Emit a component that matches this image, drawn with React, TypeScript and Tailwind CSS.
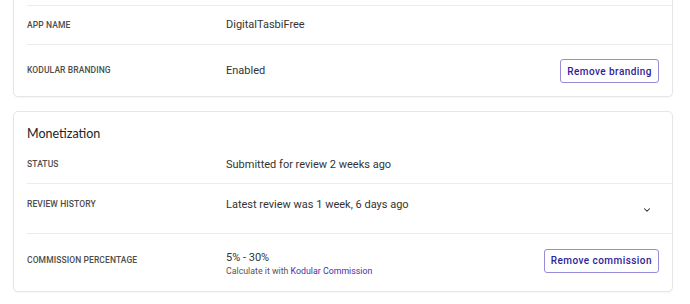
import { ChevronDown } from "lucide-react";

// One label / value row inside a settings card
function Row({
  label,
  children,
  className = "",
  labelClass = "leading-[17px]",
}: {
  label: string;
  children: React.ReactNode;
  className?: string;
  labelClass?: string;
}) {
  return (
    <div className={`ml-[13px] pr-[13px] flex border-b border-[#ececec] last:border-b-0 ${className}`}>
      <div className={`w-[199px] shrink-0 text-[8.5px] font-medium uppercase text-[#4d4d4d] tracking-[0.1px] ${labelClass}`}>{label}</div>
      <div className="flex-1 flex items-center">{children}</div>
    </div>
  );
}

function OutlineButton({ children }: { children: React.ReactNode }) {
  return (
    <button className="h-[24px] px-[6px] rounded-[3px] border border-[#9a8ad8] text-[10px] font-medium tracking-[0.45px] text-[#2f2296] bg-white">
      {children}
    </button>
  );
}

export default function App() {
  return (
    <div className="min-h-screen bg-white font-['Roboto',sans-serif] text-[#333] pb-4">
      {/* App info card (top cut off) */}
      <section className="ml-[13px] mr-[17px] -mt-px border border-[#e6e6e6] rounded-b-[5px] bg-white shadow-[0_1px_2px_rgba(0,0,0,0.04)]">
        <div className="ml-[13px] h-[6px] border-b border-[#ececec]" />
        <Row label="App name" className="h-[39px] items-center">
          <span className="text-[11px]">DigitalTasbiFree</span>
        </Row>
        <Row label="Kodular branding" className="h-[51px] items-center">
          <span className="text-[11px] mt-[2px]">Enabled</span>
          <div className="ml-auto">
            <OutlineButton>Remove branding</OutlineButton>
          </div>
        </Row>
      </section>

      {/* Monetization card */}
      <section className="ml-[13px] mr-[17px] mt-[14px] border border-[#e6e6e6] rounded-[5px] bg-white shadow-[0_1px_2px_rgba(0,0,0,0.04)]">
        <h2 className="px-[13px] pt-[13px] h-[36px] text-[12.5px] text-[#222] font-['Lato',sans-serif]">Monetization</h2>
        <Row label="Status" className="pt-[8px] pb-[10px] items-center">
          <span className="text-[11px] leading-[17px]">Submitted for review 2 weeks ago</span>
        </Row>
        <Row label="Review history" className="h-[50px] pt-[12px] items-start">
          <div className="flex-1 flex items-start">
            <span className="text-[11px] leading-[17px]">Latest review was 1 week, 6 days ago</span>
            <ChevronDown className="ml-auto mr-[7px] mt-[9px] w-[10px] h-[10px] text-[#222]" strokeWidth={2.5} />
          </div>
        </Row>
        <Row label="Commission percentage" className="h-[57px] pt-[13px] items-start" labelClass="leading-[26px]">
          <div className="flex-1 flex items-start">
            <div className="flex flex-col mt-[3px]">
              <span className="text-[11px] leading-[15px]">5% - 30%</span>
              <span className="text-[8.8px] leading-[12px] text-[#555]">
                Calculate it with <a className="text-[#4a2ea8]">Kodular Commission</a>
              </span>
            </div>
            <div className="ml-auto">
              <OutlineButton>Remove commission</OutlineButton>
            </div>
          </div>
        </Row>
      </section>
    </div>
  );
}
